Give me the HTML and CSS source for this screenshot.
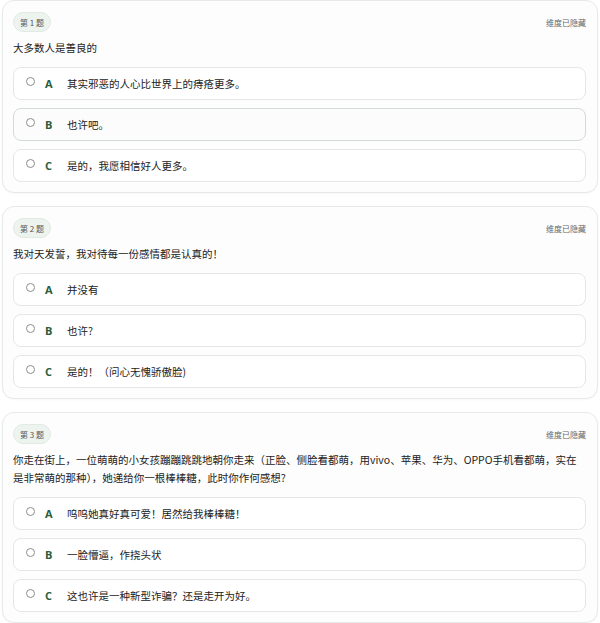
FILE: index.html
```html
<!DOCTYPE html>
<html lang="zh-CN">
<head>
<meta charset="utf-8">
<title>问卷</title>
<link rel="stylesheet" href="styles.css">
</head>
<body>
<div class="list">
  <section class="card">
    <div class="card-head">
      <span class="badge">第 1 题</span>
      <span class="dim">维度已隐藏</span>
    </div>
    <p class="question">大多数人是善良的</p>
    <div class="options">
      <div class="option"><span class="radio"></span><span class="letter">A</span><span class="text">其实邪恶的人心比世界上的痔疮更多。</span></div>
      <div class="option option-hover"><span class="radio"></span><span class="letter">B</span><span class="text">也许吧。</span></div>
      <div class="option"><span class="radio"></span><span class="letter">C</span><span class="text">是的，我愿相信好人更多。</span></div>
    </div>
  </section>
  <section class="card">
    <div class="card-head">
      <span class="badge">第 2 题</span>
      <span class="dim">维度已隐藏</span>
    </div>
    <p class="question">我对天发誓，我对待每一份感情都是认真的！</p>
    <div class="options">
      <div class="option"><span class="radio"></span><span class="letter">A</span><span class="text">并没有</span></div>
      <div class="option"><span class="radio"></span><span class="letter">B</span><span class="text">也许?</span></div>
      <div class="option"><span class="radio"></span><span class="letter">C</span><span class="text">是的！（问心无愧骄傲脸)</span></div>
    </div>
  </section>
  <section class="card">
    <div class="card-head">
      <span class="badge">第 3 题</span>
      <span class="dim">维度已隐藏</span>
    </div>
    <p class="question">你走在街上，一位萌萌的小女孩蹦蹦跳跳地朝你走来（正脸、侧脸看都萌，用vivo、苹果、华为、OPPO手机看都萌，实在是非常萌的那种），她递给你一根棒棒糖，此时你作何感想?</p>
    <div class="options">
      <div class="option"><span class="radio"></span><span class="letter">A</span><span class="text">呜呜她真好真可爱！居然给我棒棒糖！</span></div>
      <div class="option"><span class="radio"></span><span class="letter">B</span><span class="text">一脸懵逼，作挠头状</span></div>
      <div class="option"><span class="radio"></span><span class="letter">C</span><span class="text">这也许是一种新型诈骗？还是走开为好。</span></div>
    </div>
  </section>
</div>
</body>
</html>
```

FILE: styles.css
```css
html, body {
  margin: 0;
  padding: 0;
  background: #ffffff;
}
body {
  font-family: "Noto Sans CJK SC", "Open Sans", sans-serif;
  color: #222;
}
.list {
  padding: 0 2px 0 2px;
  display: flex;
  flex-direction: column;
  gap: 13px;
}
.card {
  background: #fdfdfd;
  border: 1px solid #e6eae6;
  border-radius: 12px;
  padding: 11px 11px 10px 10px;
  box-shadow: 0 1px 2px rgba(0,0,0,0.03);
}
.card-head {
  display: flex;
  justify-content: space-between;
  align-items: center;
  height: 20px;
}
.badge {
  display: inline-flex;
  align-items: center;
  justify-content: center;
  height: 20px;
  padding: 0 6px;
  border-radius: 10px;
  background: #edf3ee;
  border: 1px solid #e2ebe3;
  box-sizing: border-box;
  font-size: 8px;
  color: #555;
}
.dim {
  font-size: 8px;
  color: #666;
}
.question {
  margin: 7px 0 10px 0;
  font-size: 10.5px;
  line-height: 18px;
  color: #222;
}
.options {
  display: flex;
  flex-direction: column;
  gap: 8px;
}
.option {
  display: flex;
  align-items: center;
  height: 33px;
  box-sizing: border-box;
  border: 1px solid #e4e8e4;
  border-radius: 8px;
  background: #ffffff;
  padding-left: 12px;
}
.option-hover {
  border-color: #d3dbd4;
  background: #fbfcfb;
}
.radio {
  width: 9px;
  height: 9px;
  box-sizing: border-box;
  border: 1px solid #8a8f8a;
  border-radius: 50%;
  background: #fff;
  margin-top: -4px;
}
.letter {
  width: 10px;
  margin-left: 10px;
  font-family: "Open Sans", sans-serif;
  font-weight: 700;
  font-size: 11px;
  color: #2d5c3a;
}
.text {
  margin-left: 12px;
  font-size: 10.5px;
  color: #222;
}
```
